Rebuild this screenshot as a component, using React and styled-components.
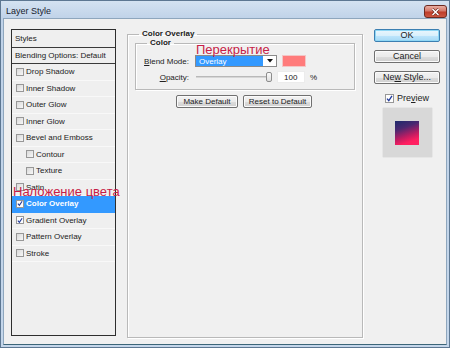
import React from "react";
import styled, { createGlobalStyle } from "styled-components";

const GlobalStyle = createGlobalStyle`
  html, body {
    margin: 0;
    padding: 0;
    background: #ffffff;
  }
  body {
    font-family: "Liberation Sans", Arial, sans-serif;
  }
`;

const Window = styled.div`
  box-sizing: border-box;
  width: 450px;
  height: 348px;
  display: flex;
  flex-direction: column;
  border: 1px solid #5d7792;
  padding: 0 2px 2px 2px;
  background: linear-gradient(#d4e2f1, #bfd2e8 18px, #c4d6ea);
  font-family: "Liberation Sans", Arial, sans-serif;
  font-size: 8px;
  color: #1b1b1b;
`;

const TitleBar = styled.div`
  height: 17px;
  flex-shrink: 0;
  display: flex;
  align-items: center;
  justify-content: space-between;
  padding: 0 0 0 3px;
`;

const Title = styled.span`
  font-size: 9px;
  color: #18222e;
  margin-top: 2px;
`;

const CloseButton = styled.div`
  box-sizing: border-box;
  width: 23px;
  height: 13px;
  align-self: flex-end;
  border: 1px solid #6d2a21;
  border-radius: 3px;
  background: linear-gradient(#e9aea2, #d4786a 45%, #be3d2a 55%, #cc5641);
  display: flex;
  align-items: center;
  justify-content: center;
`;

const Body = styled.div`
  flex: 1;
  display: flex;
  align-items: flex-start;
  gap: 11px;
  padding: 10px 6px 0 7px;
  background: #f0f0f0;
  border: 1px solid #8ea6bd;
  border-bottom-color: #3c6578;
`;

const StylesPanel = styled.div`
  box-sizing: border-box;
  flex-shrink: 0;
  width: 105px;
  height: 307px;
  border: 1px solid #2e2e2e;
  background: #efefef;
`;

const PanelHeader = styled.div`
  box-sizing: border-box;
  height: ${(p) => p.$h}px;
  display: flex;
  align-items: center;
  padding-left: 3px;
  border-bottom: 1px solid #3a3a3a;
  color: #222;
`;

const StyleRow = styled.div`
  position: relative;
  box-sizing: border-box;
  height: 16.5px;
  display: flex;
  align-items: center;
  gap: 2px;
  padding-left: ${(p) => (p.$indent ? 14 : 4)}px;
  border-bottom: 1px solid ${(p) => (p.$selected ? "#3399ff" : "#f8f8f8")};
  background: ${(p) => (p.$selected ? "#3399ff" : "transparent")};
  color: ${(p) => (p.$selected ? "#ffffff" : "#222222")};
  font-weight: ${(p) => (p.$selected ? "bold" : "normal")};
`;

const Box = styled.span`
  box-sizing: border-box;
  flex-shrink: 0;
  width: ${(p) => p.$size}px;
  height: ${(p) => p.$size}px;
  border: 1px solid #979797;
  background: ${(p) =>
    p.$checked ? "#fdfdfd" : "linear-gradient(135deg, #d9d9d9, #f7f7f7)"};
  display: flex;
  align-items: center;
  justify-content: center;
`;

const Annotation = styled.span`
  position: absolute;
  top: ${(p) => p.$top}px;
  left: ${(p) => p.$left}px;
  font-family: "Liberation Sans", Arial, sans-serif;
  font-size: 13px;
  line-height: 13px;
  font-weight: normal;
  color: #c71d47;
  white-space: nowrap;
  z-index: 2;
`;

const GroupBox = styled.fieldset`
  box-sizing: border-box;
  flex-shrink: 0;
  margin: ${(p) => (p.$inner ? "-1px 0 0 0" : "0")};
  padding: 0;
  min-width: 0;
  width: ${(p) => p.$w}px;
  height: ${(p) => (p.$h ? `${p.$h}px` : "auto")};
  border: 1px solid #b9b9b9;
  box-shadow: inset 1px 1px 0 #ffffff, 1px 1px 0 #ffffff;
`;

const Legend = styled.legend`
  margin-left: 11px;
  padding: 0 3px;
  font-size: 8px;
  line-height: 10px;
  font-weight: bold;
  color: #1b1b1b;
`;

const GroupContent = styled.div`
  padding: ${(p) => p.$pad};
`;

const FormGrid = styled.div`
  display: grid;
  grid-template-columns: 53px auto;
  column-gap: 6px;
  row-gap: 4px;
  align-items: center;
`;

const Label = styled.span`
  text-align: right;
  color: #222;
`;

const Controls = styled.div`
  display: flex;
  align-items: center;
  height: 12px;
`;

const SelectWrap = styled.div`
  position: relative;
  box-sizing: border-box;
  width: 82px;
  height: 12px;
  display: flex;
  border: 1px solid #8a8a8a;
  background: #ffffff;
`;

const SelectValue = styled.div`
  flex: 1;
  background: #3399ff;
  color: #ffffff;
  padding-left: 3px;
  display: flex;
  align-items: center;
`;

const SelectArrow = styled.div`
  width: 13px;
  display: flex;
  align-items: center;
  justify-content: center;
  background: #ffffff;
`;

const Swatch = styled.div`
  width: 24px;
  height: 12px;
  margin-left: 5px;
  background: #ff7b7b;
  box-shadow: 0 0 0 1px #f3c6c6 inset;
`;

const Slider = styled.div`
  position: relative;
  width: 77px;
  height: 12px;
  display: flex;
  align-items: center;
  justify-content: flex-end;
`;

const SliderTrack = styled.div`
  position: absolute;
  left: 1px;
  right: 2px;
  top: 5px;
  height: 2px;
  background: #d6d6d6;
  border-top: 1px solid #b9b9b9;
  box-sizing: border-box;
`;

const SliderThumb = styled.div`
  position: relative;
  box-sizing: border-box;
  width: 6px;
  height: 10px;
  border: 1px solid #8d8d8d;
  border-radius: 2px;
  background: linear-gradient(#fbfbfb, #dedede);
`;

const NumberField = styled.div`
  box-sizing: border-box;
  width: 28px;
  height: 12px;
  margin-left: 5px;
  padding-left: 6px;
  display: flex;
  align-items: center;
  background: #ffffff;
  border: 1px solid #ececec;
  color: #222;
`;

const Percent = styled.span`
  margin-left: 5px;
`;

const ButtonRow = styled.div`
  display: flex;
  justify-content: center;
  gap: 5px;
  margin-top: 5px;
  padding-right: 2px;
`;

const Button = styled.button`
  box-sizing: border-box;
  width: ${(p) => p.$w}px;
  height: 13px;
  padding: 0;
  font-family: "Liberation Sans", Arial, sans-serif;
  font-size: 8px;
  line-height: 11px;
  color: #1b1b1b;
  border: 1px solid ${(p) => (p.$default ? "#3c7fb1" : "#707070")};
  border-radius: 2px;
  background: ${(p) =>
    p.$default
      ? "linear-gradient(#eaf6fd 0%, #d9f0fc 50%, #bee6fd 51%, #a7d9f5 100%)"
      : "linear-gradient(#f2f2f2 0%, #ebebeb 50%, #dddddd 51%, #cfcfcf 100%)"};
  box-shadow: inset 0 0 0 1px ${(p) => (p.$default ? "#8fd7f5" : "#fbfbfb")};
`;

const RightColumn = styled.div`
  flex-shrink: 0;
  width: 66px;
  display: flex;
  flex-direction: column;
  align-items: center;
  gap: 8px;
`;

const PreviewToggle = styled.div`
  display: flex;
  align-items: center;
  gap: 3px;
  margin-top: 1px;
  font-size: 9px;
  color: #222;
`;

const PreviewBox = styled.div`
  width: 49px;
  height: 49px;
  margin-top: -3px;
  display: flex;
  align-items: center;
  justify-content: center;
  background: #d8d8d8;
  box-shadow: 0 0 1px #b8b8b8;
`;

const PreviewSample = styled.div`
  width: 24px;
  height: 24px;
  background: linear-gradient(160deg, #1d2a6c 0%, #4a2870 30%, #c01c62 60%, #ff1e60 80%, #ff2262 100%);
`;

const CheckMark = () => (
  <svg width="7" height="7" viewBox="0 0 7 7">
    <path d="M1 3.6 L2.8 5.6 L6 0.9" fill="none" stroke="#213a9c" strokeWidth="1.3" />
  </svg>
);

const Checkbox = ({ checked, size = 8 }) => (
  <Box $size={size} $checked={checked}>
    {checked && <CheckMark />}
  </Box>
);

const styleItems = [
  { name: "Drop Shadow" },
  { name: "Inner Shadow" },
  { name: "Outer Glow" },
  { name: "Inner Glow" },
  { name: "Bevel and Emboss" },
  { name: "Contour", indent: true },
  { name: "Texture", indent: true },
  { name: "Satin" },
  { name: "Color Overlay", checked: true, selected: true, note: "Наложение цвета" },
  { name: "Gradient Overlay", checked: true },
  { name: "Pattern Overlay" },
  { name: "Stroke" },
];

export default function App() {
  return (
    <>
      <GlobalStyle />
      <Window>
        <TitleBar>
          <Title>Layer Style</Title>
          <CloseButton>
            <svg width="9" height="8" viewBox="0 0 9 8">
              <path d="M1.5 1 L7.5 7 M7.5 1 L1.5 7" stroke="#6a2218" strokeWidth="2.6" />
              <path d="M1.5 1 L7.5 7 M7.5 1 L1.5 7" stroke="#ffffff" strokeWidth="1.5" />
            </svg>
          </CloseButton>
        </TitleBar>
        <Body>
          <StylesPanel>
            <PanelHeader $h={18}>Styles</PanelHeader>
            <PanelHeader $h={16}>Blending Options: Default</PanelHeader>
            {styleItems.map((item) => (
              <StyleRow key={item.name} $indent={item.indent} $selected={item.selected}>
                {item.note && (
                  <Annotation $top={-11} $left={1}>
                    {item.note}
                  </Annotation>
                )}
                <Checkbox checked={item.checked} />
                <span>{item.name}</span>
              </StyleRow>
            ))}
          </StylesPanel>

          <GroupBox $w={236} $h={309}>
            <Legend>Color Overlay</Legend>
            <GroupContent $pad="0 7px">
              <GroupBox $w={220} $inner>
                <Legend>Color</Legend>
                <GroupContent $pad="7px 0 6px 0">
                  <FormGrid>
                    <Label>
                      <u>B</u>lend Mode:
                    </Label>
                    <Controls>
                      <SelectWrap>
                        <Annotation $top={-13} $left={0}>
                          Перекрытие
                        </Annotation>
                        <SelectValue>Overlay</SelectValue>
                        <SelectArrow>
                          <svg width="6" height="4" viewBox="0 0 6 4">
                            <path d="M0 0 H6 L3 3.5 Z" fill="#111" />
                          </svg>
                        </SelectArrow>
                      </SelectWrap>
                      <Swatch />
                    </Controls>
                    <Label>
                      <u>O</u>pacity:
                    </Label>
                    <Controls>
                      <Slider>
                        <SliderTrack />
                        <SliderThumb />
                      </Slider>
                      <NumberField>100</NumberField>
                      <Percent>%</Percent>
                    </Controls>
                  </FormGrid>
                </GroupContent>
              </GroupBox>
              <ButtonRow>
                <Button $w={62}>Make Default</Button>
                <Button $w={69}>Reset to Default</Button>
              </ButtonRow>
            </GroupContent>
          </GroupBox>

          <RightColumn>
            <Button $w={66} $default style={{ fontSize: 9 }}>
              OK
            </Button>
            <Button $w={66} style={{ fontSize: 9 }}>
              Cancel
            </Button>
            <Button $w={66} style={{ fontSize: 9 }}>
              Ne<u>w</u> Style...
            </Button>
            <PreviewToggle>
              <Checkbox checked size={9} />
              <span>
                Pre<u>v</u>iew
              </span>
            </PreviewToggle>
            <PreviewBox>
              <PreviewSample />
            </PreviewBox>
          </RightColumn>
        </Body>
      </Window>
    </>
  );
}
